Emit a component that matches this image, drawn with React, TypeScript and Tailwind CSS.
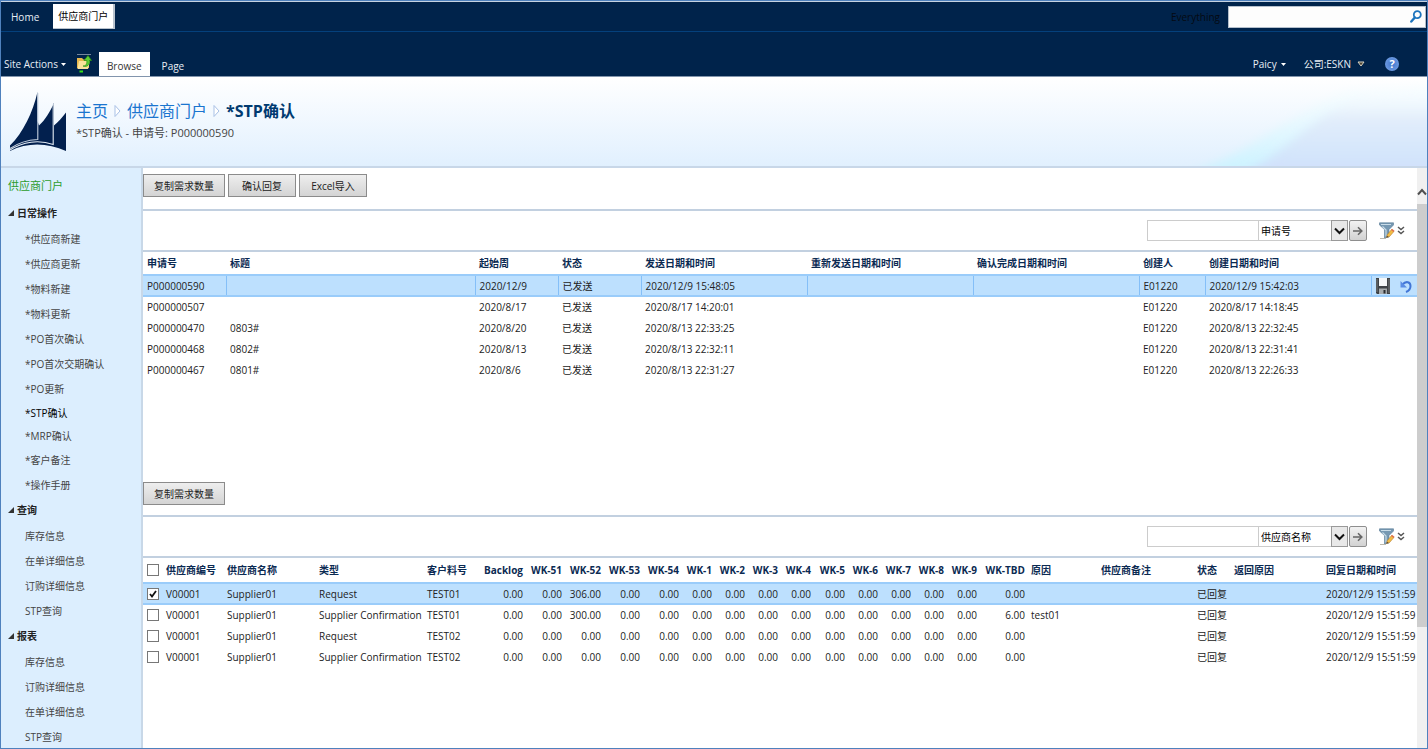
import React from "react";

type Item = { label: string; active?: boolean; compact?: boolean };
type Group = { title: string; items: Item[] };

const groups: Group[] = [
  {
    title: "日常操作",
    items: [
      { label: "*供应商新建" },
      { label: "*供应商更新" },
      { label: "*物料新建" },
      { label: "*物料更新" },
      { label: "*PO首次确认" },
      { label: "*PO首次交期确认" },
      { label: "*PO更新" },
      { label: "*STP确认", active: true, compact: true },
      { label: "*MRP确认", compact: true },
      { label: "*客户备注" },
      { label: "*操作手册" },
    ],
  },
  {
    title: "查询",
    items: [{ label: "库存信息" }, { label: "在单详细信息" }, { label: "订购详细信息" }, { label: "STP查询" }],
  },
  {
    title: "报表",
    items: [{ label: "库存信息" }, { label: "订购详细信息" }, { label: "在单详细信息" }, { label: "STP查询" }],
  },
];

const requestWidths = [83, 249, 83, 83, 166, 166, 166, 66, 166, 46];
const requestHeads = ["申请号", "标题", "起始周", "状态", "发送日期和时间", "重新发送日期和时间", "确认完成日期和时间", "创建人", "创建日期和时间"];
const requests = [
  ["P000000590", "", "2020/12/9", "已发送", "2020/12/9 15:48:05", "", "", "E01220", "2020/12/9 15:42:03"],
  ["P000000507", "", "2020/8/17", "已发送", "2020/8/17 14:20:01", "", "", "E01220", "2020/8/17 14:18:45"],
  ["P000000470", "0803#", "2020/8/20", "已发送", "2020/8/13 22:33:25", "", "", "E01220", "2020/8/13 22:32:45"],
  ["P000000468", "0802#", "2020/8/13", "已发送", "2020/8/13 22:32:11", "", "", "E01220", "2020/8/13 22:31:41"],
  ["P000000467", "0801#", "2020/8/6", "已发送", "2020/8/13 22:31:27", "", "", "E01220", "2020/8/13 22:26:33"],
];

const lineWidths = [20, 61, 92, 108, 58, 44, 39, 39, 39, 39, 33, 33, 33, 33, 34, 33, 33, 33, 33, 48, 70, 96, 37, 92, 94];
const weekHeads = ["Backlog", "WK-51", "WK-52", "WK-53", "WK-54", "WK-1", "WK-2", "WK-3", "WK-4", "WK-5", "WK-6", "WK-7", "WK-8", "WK-9", "WK-TBD"];
const lines = [
  { type: "Request", part: "TEST01", week52: "306.00", tbd: "0.00", reason: "", checked: true },
  { type: "Supplier Confirmation", part: "TEST01", week52: "300.00", tbd: "6.00", reason: "test01", checked: false },
  { type: "Request", part: "TEST02", week52: "0.00", tbd: "0.00", reason: "", checked: false },
  { type: "Supplier Confirmation", part: "TEST02", week52: "0.00", tbd: "0.00", reason: "", checked: false },
];

function SailLogo() {
  return (
    <svg viewBox="0 0 58 62" className="h-[62px] w-[58px] shrink-0" aria-hidden="true">
      <path
        d="M28.500 1C24 21 14 42 1 54.500V60C19 51 39 52 57 60V21.500C53 27 49 31 45 34.500V12C41 21 36 29 30 34.500L28.500 30Z"
        fill="#02204e"
      />
      <path d="M28.800 2V48.500C18 49 9 52 1 57.500" fill="none" stroke="#c3cfde" strokeWidth="1.100" />
      <path d="M44.200 13V53.500C30 48.500 14 50.500 1 59" fill="none" stroke="#e3ebf4" strokeWidth="1.100" />
    </svg>
  );
}

function FolderUp() {
  return (
    <svg viewBox="0 0 16 19" className="h-[19px] w-4" aria-hidden="true">
      <path d="M1 .5H15" stroke="#75879d" />
      <path d="M1 4H6L7.500 5.500H13V14H1Z" fill="#e8b84e" />
      <path d="M3 7H14L12 15H1.500Z" fill="#fbe39a" />
      <path d="M7 12C10.500 12 11 9.500 10.800 6.500H8L12 1.500L15.500 6.500H13.500C13.800 10.500 11.500 13.500 7 12Z" fill="#5fce35" stroke="#259111" strokeWidth=".7" />
      <path d="M3.500 17.500H7" stroke="#36e416" strokeWidth="2" />
    </svg>
  );
}

function Magnifier() {
  return (
    <svg viewBox="0 0 12 13" className="h-[13px] w-3" aria-hidden="true">
      <circle cx="7.300" cy="4.700" r="3.500" fill="none" stroke="#1d74bd" strokeWidth="1.800" />
      <path d="M4.800 7.500L1.300 11.500" stroke="#1d74bd" strokeWidth="2.400" strokeLinecap="round" />
    </svg>
  );
}

function FunnelPencil() {
  return (
    <svg viewBox="0 0 16 17" className="h-[17px] w-4" aria-hidden="true">
      <path d="M.5 .8H14.500V3L10 7.500V15L5.500 16V7.500L.5 3Z" fill="#7698b2" stroke="#587b95" strokeWidth=".6" />
      <path d="M2 2.500H12M3.500 4.500L7 8V14.500" stroke="#c9dce8" strokeWidth="1.200" fill="none" />
      <path d="M1 16.500H7" stroke="#bdb9ad" />
      <path d="M7.500 15.500L8.200 12.800L12.500 7.500L15 9.400L10.500 14.600Z" fill="#f3bd45" stroke="#ad7122" strokeWidth=".5" />
      <path d="M12 8L13 6.800L15.500 8.700L14.500 9.900Z" fill="#df704d" />
      <path d="M7.500 15.500L8 13.700L9.500 15Z" fill="#554135" />
    </svg>
  );
}

function DoubleChevron() {
  return (
    <svg viewBox="0 0 8 9" className="h-[9px] w-2" aria-hidden="true">
      <path d="M1 1L4 3.500L7 1M1 5L4 7.500L7 5" fill="none" stroke="#555" strokeWidth="1.500" />
    </svg>
  );
}

function Floppy() {
  return (
    <svg viewBox="0 0 14 16" className="h-4 w-[14px]" aria-hidden="true">
      <path d="M0 0H14V16H1L0 15Z" fill="#3f4246" />
      <path d="M3 0H11V8H3Z" fill="#f5f7f8" />
      <path d="M3 10.500H11V16H3Z" fill="#a7abad" />
      <path d="M7.500 12H9.500V15.500H7.500Z" fill="#2b2d30" />
      <path d="M1 1V14M13 1V15" stroke="#74787b" />
    </svg>
  );
}

function Undo() {
  return (
    <svg viewBox="0 0 12 14" className="h-[14px] w-3" aria-hidden="true">
      <path d="M2.500 5.500C6 1.500 10.500 3 10.500 7C10.500 10 8.500 12 6 13" fill="none" stroke="#4276d6" strokeWidth="2" />
      <path d="M.5 2V8.500H7Z" fill="#5a8ce4" />
    </svg>
  );
}

function Separator() {
  return (
    <svg viewBox="0 0 7 14" className="h-[14px] w-[7px]" aria-hidden="true">
      <path d="M1 1.500V12.500L6 7Z" fill="#fff" stroke="#a9c1e6" />
    </svg>
  );
}

function PushButton({ children }: { children: React.ReactNode }) {
  return (
    <button type="button" className="h-[23px] min-w-[68px] whitespace-nowrap border border-[#8b8b8b] bg-linear-to-b from-[#eeeeee] to-[#d4d4d4] px-[10px] text-[#222]">
      {children}
    </button>
  );
}

function FilterBar({ id, field }: { id: string; field: string }) {
  return (
    <div className="flex h-[41px] items-center justify-end border-t-2 border-[#c2d0e0] pr-3">
      <input id={`${id}-text`} aria-label="筛选值" className="h-[21px] w-28 border border-[#ccc] bg-white px-1" />
      <div className="relative -ml-px w-[90px]">
        <select aria-label="筛选字段" defaultValue={field} className="block h-[21px] w-full appearance-none border border-[#ccc] bg-white pl-[2px] text-black">
          <option>{field}</option>
        </select>
        <span className="pointer-events-none absolute top-0 right-0 flex h-[21px] w-[17px] items-center justify-center border border-[#999] bg-[#e8e8e8]">
          <svg viewBox="0 0 11 8" className="h-2 w-[11px]" aria-hidden="true">
            <path d="M1 1.500L5.500 6L10 1.500" fill="none" stroke="#111" strokeWidth="2" />
          </svg>
        </span>
      </div>
      <button type="button" aria-label="应用" className="ml-px flex h-[21px] w-[18px] items-center justify-center rounded-[2px] border border-[#8e8e8e] bg-linear-to-b from-[#f2f2f2] to-[#d2d2d2]">
        <svg viewBox="0 0 10 10" className="size-[10px]" aria-hidden="true">
          <path d="M0 5H8.500M5 1.200L8.800 5L5 8.800" fill="none" stroke="#666" strokeWidth="1.600" />
        </svg>
      </button>
      <button type="button" aria-label="编辑筛选" className="ml-3 flex items-center gap-[2px]">
        <FunnelPencil />
        <DoubleChevron />
      </button>
    </div>
  );
}

function Cols({ widths }: { widths: number[] }) {
  return (
    <colgroup>
      {widths.map((w, i) => (
        <col key={i} style={{ width: w }} />
      ))}
    </colgroup>
  );
}

function Check({ label, checked }: { label: string; checked?: boolean }) {
  return (
    <span className="relative block size-3">
      <input type="checkbox" aria-label={label} defaultChecked={checked} className="peer block size-3 appearance-none border border-[#777] bg-white" />
      <svg viewBox="0 0 12 12" className="pointer-events-none absolute inset-0 hidden size-3 peer-checked:block" aria-hidden="true">
        <path d="M3 6L5 8.500L9 3" fill="none" stroke="#111" strokeWidth="1.800" />
      </svg>
    </span>
  );
}

function RequestTable() {
  return (
    <table className="w-full table-fixed border-collapse text-left whitespace-nowrap">
      <Cols widths={requestWidths} />
      <thead>
        <tr className="h-6 border-t-2 border-[#c2d0e0] text-[#0b2a52]">
          {requestHeads.map((h) => (
            <th key={h} className="p-0 pl-1 font-bold">{h}</th>
          ))}
          <td />
        </tr>
      </thead>
      <tbody>
        {requests.map((r, i) => (
          <tr key={r[0]} className={i === 0 ? "h-[21px] border-y-2 border-[#9accfa] bg-[#bde0fe]" : "h-[21px]"}>
            {r.map((c, j) => (
              <td key={j} className={i === 0 ? "border-r border-[#84bff8] p-0 pl-1" : "p-0 pl-1"}>{c}</td>
            ))}
            <td className="p-0 pl-1">
              {i === 0 && (
                <span className="flex items-center gap-[10px]">
                  <button type="button" aria-label="保存"><Floppy /></button>
                  <button type="button" aria-label="撤消"><Undo /></button>
                </span>
              )}
            </td>
          </tr>
        ))}
      </tbody>
    </table>
  );
}

function LineTable() {
  return (
    <table className="w-full table-fixed border-collapse text-left whitespace-nowrap">
      <Cols widths={lineWidths} />
      <thead>
        <tr className="h-[26px] border-t-2 border-[#c2d0e0] text-[#0b2a52]">
          <td className="p-0 pl-1"><Check label="全选" /></td>
          <th className="p-0 pl-[3px] font-bold">供应商编号</th>
          <th className="p-0 pl-[3px] font-bold">供应商名称</th>
          <th className="p-0 pl-[3px] font-bold">类型</th>
          <th className="p-0 pl-[3px] font-bold">客户料号</th>
          {weekHeads.map((h) => (
            <th key={h} className="p-0 pr-[3px] text-right font-bold">{h}</th>
          ))}
          <th className="p-0 pl-[3px] font-bold">原因</th>
          <th className="p-0 pl-[3px] font-bold">供应商备注</th>
          <th className="p-0 pl-[3px] font-bold">状态</th>
          <th className="p-0 pl-[3px] font-bold">返回原因</th>
          <th className="p-0 pl-[3px] font-bold">回复日期和时间</th>
        </tr>
      </thead>
      <tbody>
        {lines.map((l, i) => (
          <tr key={i} className={l.checked ? "h-[21px] border-y-2 border-[#9accfa] bg-[#bde0fe]" : "h-[21px]"}>
            <td className="p-0 pl-1"><Check label={`选择第${i + 1}行`} checked={l.checked} /></td>
            <td className="p-0 pl-[3px]">V00001</td>
            <td className="p-0 pl-[3px]">Supplier01</td>
            <td className="p-0 pl-[3px]">{l.type}</td>
            <td className="p-0 pl-[3px]">{l.part}</td>
            {weekHeads.map((h) => (
              <td key={h} className="p-0 pr-[3px] text-right">{h === "WK-52" ? l.week52 : h === "WK-TBD" ? l.tbd : "0.00"}</td>
            ))}
            <td className="p-0 pl-[3px]">{l.reason}</td>
            <td />
            <td className="p-0 pl-[3px]">已回复</td>
            <td />
            <td className="p-0 pl-[3px]">2020/12/9 15:51:59</td>
          </tr>
        ))}
      </tbody>
    </table>
  );
}

export default function App() {
  return (
    <div className="flex h-screen flex-col overflow-hidden border border-[#4f81bd] bg-white font-['Open_Sans','Noto_Sans_CJK_SC',sans-serif] text-[10px] leading-4 text-[#222]">
      <header className="shrink-0 bg-[#00234b] text-[#e8eef5]">
        <div className="flex h-[31px] items-center justify-between border-t border-b border-t-[#c5d2e2] border-b-[#04407c]">
          <nav className="flex items-center gap-[14px] pl-[10px]">
            <a href="#home">Home</a>
            <a href="#portal" className="flex h-[25px] items-center border-r-2 border-b border-[#b9c3ce] bg-white px-[5px] text-black">供应商门户</a>
          </nav>
          <div className="flex items-center gap-2 pr-px">
            <label htmlFor="search" className="text-[#050a12]">Everything</label>
            <div className="flex h-[22px] items-center border border-[#b4bfcc] bg-[#fdfdfd]">
              <input id="search" className="h-5 w-[181px] bg-transparent px-1 text-black outline-none" />
              <button type="button" aria-label="搜索" className="pr-[3px]"><Magnifier /></button>
            </div>
          </div>
        </div>
        <div className="flex h-[45px] items-end justify-between border-b border-[#8295ad]">
          <div className="flex items-end">
            <button type="button" className="flex h-6 items-center gap-[3px] pl-[3px] whitespace-nowrap">
              Site Actions
              <svg viewBox="0 0 5 3" className="h-[3px] w-[5px]" aria-hidden="true"><path d="M0 0H5L2.500 3Z" fill="#fff" /></svg>
            </button>
            <button type="button" aria-label="向上浏览" className="ml-[10px] pb-[3px]"><FolderUp /></button>
            <a href="#browse" className="ml-[7px] flex h-6 items-center bg-white px-2 pt-1 text-[#333]">Browse</a>
            <a href="#page" className="ml-3 flex h-6 items-center pt-1">Page</a>
          </div>
          <div className="flex h-6 items-center pr-7">
            <button type="button" className="flex items-center gap-1">
              Paicy
              <svg viewBox="0 0 5 3" className="h-[3px] w-[5px]" aria-hidden="true"><path d="M0 0H5L2.500 3Z" fill="#fff" /></svg>
            </button>
            <button type="button" className="ml-[18px] flex items-center gap-[6px]">
              公司:ESKN
              <svg viewBox="0 0 8 6" className="h-[6px] w-2" aria-hidden="true"><path d="M1 1H7L4 5Z" fill="#4b4231" stroke="#d8d4c4" /></svg>
            </button>
            <button type="button" aria-label="帮助" className="ml-5 flex size-[14px] items-center justify-center rounded-full bg-radial from-[#3f75cc] to-[#7da7e8] text-[11px] leading-[14px] font-bold text-white">?</button>
          </div>
        </div>
      </header>

      <section className="relative flex h-[91px] shrink-0 items-start border-b-2 border-[#c8d7e8] bg-linear-to-b from-white to-[#e1f0fe] pt-[14px] pl-2">
        <svg viewBox="0 0 400 90" preserveAspectRatio="none" className="absolute top-0 right-0 h-full w-[400px]" aria-hidden="true">
          <defs>
            <linearGradient id="sweep" x1="0" y1="0" x2="0" y2="1">
              <stop offset="0" stopColor="#ffffff" stopOpacity="0" />
              <stop offset=".35" stopColor="#e2edfb" />
              <stop offset=".75" stopColor="#d3e5fb" />
              <stop offset="1" stopColor="#d0dcfd" />
            </linearGradient>
            <linearGradient id="glow" x1="0" y1="0" x2="0" y2="1">
              <stop offset="0" stopColor="#f4ffff" stopOpacity=".3" />
              <stop offset="1" stopColor="#c9f2ff" />
            </linearGradient>
            <filter id="soft" x="-10%" y="-20%" width="120%" height="140%"><feGaussianBlur stdDeviation="5" /></filter>
          </defs>
          <path d="M160 98C215 82 260 40 320 14L410 8V98Z" fill="url(#glow)" filter="url(#soft)" />
          <path d="M205 104C260 78 280 42 335 20L420 10V104Z" fill="url(#sweep)" filter="url(#soft)" />
        </svg>
        <SailLogo />
        <div className="relative pl-[9px]">
          <h1 className="flex h-10 items-center gap-[6px] text-base">
            <a href="#home" className="text-[#1a75cf]">主页</a>
            <Separator />
            <a href="#portal" className="text-[#1a75cf]">供应商门户</a>
            <Separator />
            <span className="font-bold text-[#003a70]">*STP确认</span>
          </h1>
          <p className="-mt-[6px] text-[11px] text-[#444]">*STP确认 - 申请号: P000000590</p>
        </div>
      </section>

      <div className="flex min-h-0 flex-1">
        <aside className="w-[142px] shrink-0 overflow-hidden border-r-2 border-[#c8d8e8] bg-[#dceefe] pt-[10px]">
          <a href="#portal" className="block pl-[7px] text-[11px] text-[#2b9c2b]">供应商门户</a>
          <nav className="pt-2">
            {groups.map((g) => (
              <section key={g.title} className="mb-[2px]">
                <h2 className="mb-[2px] flex h-[22px] items-center gap-[3px] pl-[7px] font-bold text-[#222]">
                  <svg viewBox="0 0 6 6" className="size-[6px]" aria-hidden="true"><path d="M6 0V6H0Z" fill="#333" /></svg>
                  {g.title}
                </h2>
                <ul>
                  {g.items.map((it) => (
                    <li key={it.label} className={it.compact ? "flex h-[23px] items-center pl-6" : "flex h-[25px] items-center pl-6"}>
                      <a href="#list" className={it.active ? "text-black" : "text-[#444]"}>{it.label}</a>
                    </li>
                  ))}
                </ul>
              </section>
            ))}
          </nav>
        </aside>

        <main className="flex min-w-0 flex-1 flex-col overflow-hidden">
          <div className="flex gap-[3px] pt-[6px] pb-3">
            <PushButton>复制需求数量</PushButton>
            <PushButton>确认回复</PushButton>
            <PushButton>Excel导入</PushButton>
          </div>
          <FilterBar id="request" field="申请号" />
          <RequestTable />
          <div className="flex pt-[102px] pb-[10px]">
            <PushButton>复制需求数量</PushButton>
          </div>
          <FilterBar id="line" field="供应商名称" />
          <LineTable />
        </main>

        <div className="flex w-[10px] shrink-0 flex-col bg-[#f0f0f0]" aria-hidden="true">
          <div className="flex h-9 items-end justify-center pb-2">
            <svg viewBox="0 0 10 8" className="h-2 w-[10px]"><path d="M1 6.500L5 2L9 6.500" fill="none" stroke="#505050" strokeWidth="2" /></svg>
          </div>
          <div className="h-[73%] bg-[#cdcdcd]" />
        </div>
      </div>
    </div>
  );
}
